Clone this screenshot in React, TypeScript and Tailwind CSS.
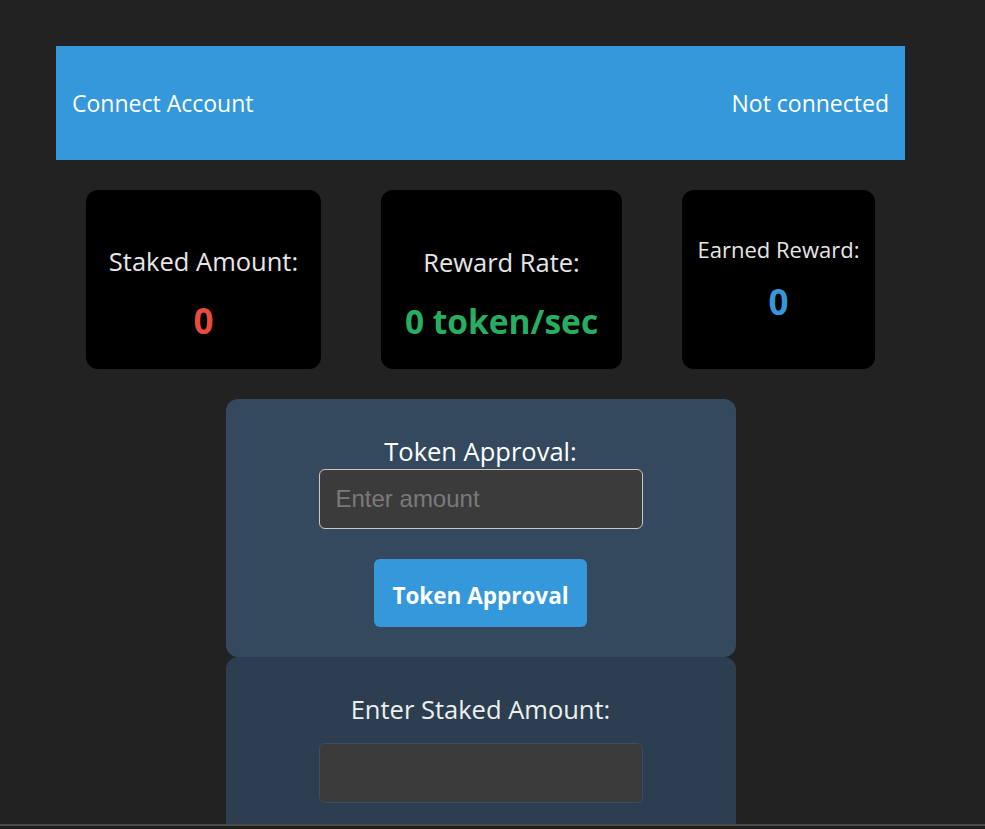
import React from "react";

const font = { fontFamily: '"Open Sans", "Noto Sans", sans-serif' };

export default function App() {
  return (
    <div className="min-h-[829px] w-full bg-[#222222] pt-[46px]" style={font}>
      <div className="ml-[56px] flex w-[849px] flex-col items-center">
        <div className="flex h-[114px] w-full items-center justify-between bg-[#3498db] px-4 text-[23px] text-white">
          <span>Connect Account</span>
          <span>Not connected</span>
        </div>

        <div className="mt-[30px] flex w-full justify-center gap-[60px]">
          <div className="flex h-[179px] w-[235px] flex-col items-center rounded-xl bg-black pt-[56px]">
            <div className="text-[25.5px] leading-[30px] text-[#e6e6e6]">Staked Amount:</div>
            <div className="mt-[25px] text-[35px] font-bold leading-[40px] text-[#e74c3c]">0</div>
          </div>
          <div className="flex h-[179px] w-[241px] flex-col items-center rounded-xl bg-black pt-[57px]">
            <div className="text-[25.5px] leading-[30px] text-[#e6e6e6]">Reward Rate:</div>
            <div className="mt-[24px] text-[33.5px] font-bold leading-[40px] text-[#27ae60]">0 token/sec</div>
          </div>
          <div className="flex h-[179px] w-[193px] flex-col items-center rounded-xl bg-black pt-[45px]">
            <div className="text-[22px] leading-[28px] text-[#e6e6e6]">Earned Reward:</div>
            <div className="mt-[19px] text-[35px] font-bold leading-[40px] text-[#3498db]">0</div>
          </div>
        </div>

        <div className="mt-[30px] flex h-[258px] w-[510px] flex-col items-center rounded-xl bg-[#34495e] pt-[37px]">
          <div className="text-[25.5px] leading-[30px] text-white">Token Approval:</div>
          <input
            placeholder="Enter amount"
            className="mt-[3px] h-[60px] w-[324px] rounded-md border border-[#c8c8c8] bg-[#3b3b3b] px-4 text-[24px] text-white outline-none placeholder:text-[#7a7a7a]"
            style={{ fontFamily: '"Liberation Sans", Arial, sans-serif' }}
          />
          <button className="mt-[30px] h-[68px] w-[213px] rounded-md bg-[#3498db] pt-[5px] text-[22.5px] font-bold text-white">
            Token Approval
          </button>
        </div>

        <div className="flex h-[200px] w-[510px] flex-col items-center rounded-t-xl bg-[#2c3e50] pt-[37px]">
          <div className="text-[25.5px] leading-[30px] text-[#ecf0f1]">Enter Staked Amount:</div>
          <input
            className="mt-[19px] h-[60px] w-[324px] rounded-md border border-[#34506a] bg-[#3b3b3b] px-4 text-[24px] text-white outline-none"
          />
        </div>
      </div>
      <div className="fixed bottom-0 left-0 h-[5px] w-full border-t-2 border-[#4b4b4b] bg-[#1e1e1c]" />
    </div>
  );
}
